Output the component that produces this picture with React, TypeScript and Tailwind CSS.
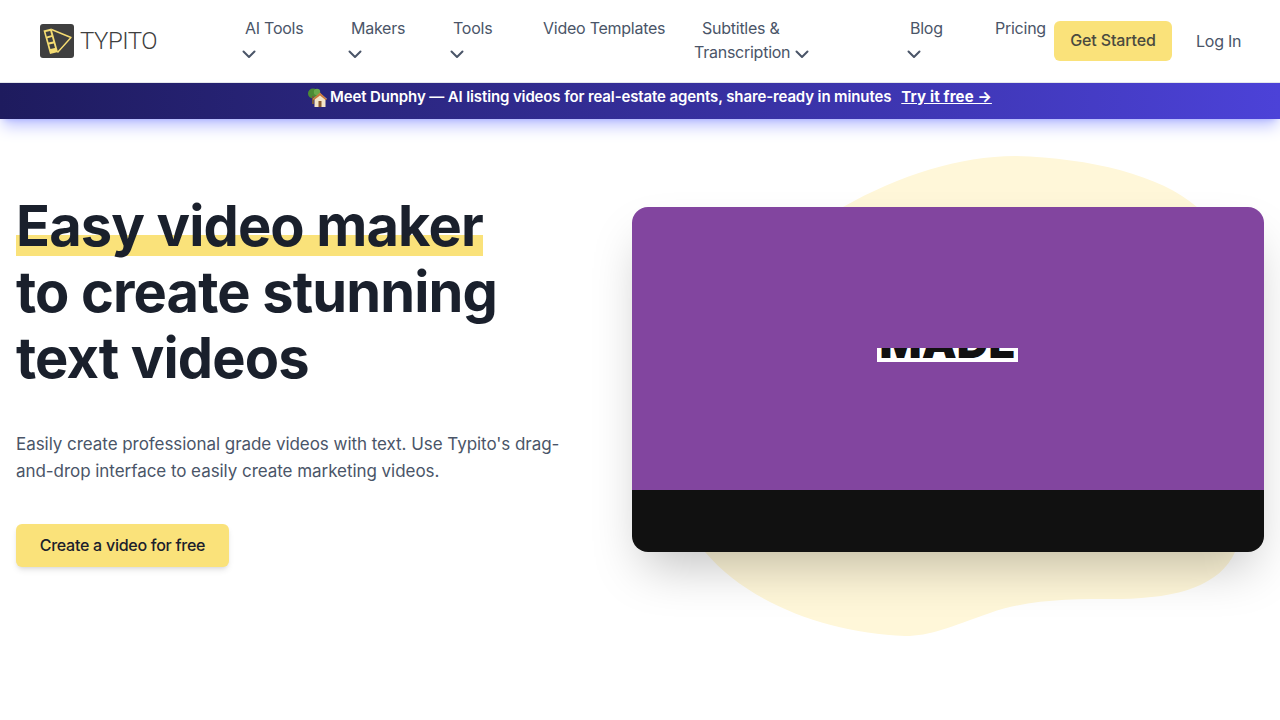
import React from 'react';

const Chevron = () => (
  <svg
    viewBox="0 0 24 24"
    fill="none"
    stroke="currentColor"
    strokeWidth="2"
    strokeLinecap="round"
    strokeLinejoin="round"
    className="inline-block w-6 h-6 align-top mt-[2px]"
  >
    <path d="M6.5 9.5 L12 15 L17.5 9.5" />
  </svg>
);

const Logo = () => (
  <svg viewBox="0 0 34 34" className="w-[34px] h-[34px] shrink-0">
    <rect width="34" height="34" rx="3" fill="#3f3f3f" />
    <path d="M11.5 5.5 L31 13.5 L17.5 28.5" fill="none" stroke="#f5dc72" strokeWidth="1.4" strokeLinejoin="round" />
    <path d="M3.5 6.5 L11.5 4.5 L18 28 L10 30 Z" fill="#f5dc72" />
    <g fill="#3f3f3f">
      <path d="M5.6 8 L10.2 6.9 L11.4 11.3 L6.8 12.4 Z" />
      <path d="M7.4 14.2 L12 13.1 L13.2 17.5 L8.6 18.6 Z" />
      <path d="M9.2 20.6 L13.8 19.5 L15 23.9 L10.4 25 Z" />
    </g>
  </svg>
);

const Header = () => (
  <header className="flex items-center h-[83px] pl-10 pr-10 bg-white border-b border-gray-200">
    <div className="flex items-center gap-[6px] w-[197px] shrink-0">
      <Logo />
      <span className="text-2xl font-light tracking-[-0.5px] font-['Roboto',sans-serif] text-[#3f3f3f]">TYPITO</span>
    </div>
    <nav className="flex items-start h-full pt-4 text-base leading-6 tracking-[-0.25px] text-[#4a5568]">
      <a className="w-[106px] shrink-0 block">
        <span className="block w-[68px] indent-2">
          AI&nbsp;Tools
          <Chevron />
        </span>
      </a>
      <a className="w-[102px] shrink-0 block">
        <span className="block w-[68px] indent-2">
          Makers
          <Chevron />
        </span>
      </a>
      <a className="w-[90px] shrink-0 block">
        <span className="block w-[60px] indent-2">
          Tools
          <Chevron />
        </span>
      </a>
      <a className="w-[159px] shrink-0 indent-2 block">Video Templates</a>
      <a className="w-[208px] shrink-0 block">
        <span className="block w-[130px] indent-2">
          Subtitles &amp; Transcription
          <Chevron />
        </span>
      </a>
      <a className="w-[85px] shrink-0 block">
        <span className="block w-[60px] indent-2">
          Blog
          <Chevron />
        </span>
      </a>
      <a className="w-[67px] shrink-0 indent-2 block">Pricing</a>
    </nav>
    <a className="flex items-center justify-center w-[118px] h-10 pb-[2px] rounded-md bg-[#fae27a] font-medium tracking-[-0.15px] text-[#4a4a3f] shrink-0">
      Get Started
    </a>
    <a className="ml-6 whitespace-nowrap tracking-[-0.25px] text-[#4a5568]">Log In</a>
  </header>
);

// the house-and-tree emoji of the banner
const HouseIcon = () => (
  <svg viewBox="0 0 20 20" className="w-5 h-5 shrink-0 mt-[3px] mr-[3px]">
    <circle cx="6" cy="5.5" r="5" fill="#4d8a35" />
    <circle cx="10" cy="4" r="3.2" fill="#6aa84a" />
    <rect x="5" y="8" width="2" height="8" fill="#7a5a3a" />
    <path d="M6 11 L13 5 L20 11 L18.5 11 L18.5 19 L7.5 19 L7.5 11 Z" fill="#f3e4c8" />
    <path d="M5.5 11.5 L13 4.5 L20 11.5 L18.6 12 L13 7.5 L7 12 Z" fill="#c8763a" />
    <rect x="11.5" y="13" width="3" height="6" fill="#8a5a30" />
  </svg>
);

const Banner = () => (
  <div className="flex h-9 pl-[307px] pt-[2px] bg-gradient-to-r from-[#1e1b5e] to-[#4c42d8] shadow-lg shadow-indigo-400/50 text-[15px] font-semibold text-white">
    <HouseIcon />
    <span className="leading-6 whitespace-nowrap tracking-[-0.125px]">
      Meet Dunphy — AI listing videos for real-estate agents, share-ready in minutes
    </span>
    <span className="ml-[10px] leading-6 underline font-bold tracking-[0.15px] whitespace-nowrap">Try it free →</span>
  </div>
);

const Blob = () => (
  <svg viewBox="0 0 580 490" className="absolute left-[680px] top-[36px] w-[580px] h-[490px]">
    <path
      fill="#fff7d9"
      d="M163 52 C220 20 280 1 335 1 C410 3 480 20 517 52 L555 397 C540 430 500 443 440 444 C390 444 350 444 310 458 C270 472 250 481 225 481 C150 478 70 450 25 397 Z"
    />
  </svg>
);

const Hero = () => (
  <section className="relative flex flex-1 gap-[48px] px-4 pt-[74px]">
    <Blob />
    <div className="relative w-[568px] shrink-0">
      <h1 className="text-[56px] leading-[66px] font-[650] tracking-[-0.88px] text-[#1a202c]">
        <span className="bg-[linear-gradient(transparent_43px,#fae27a_43px,#fae27a_64px,transparent_64px)]">
          Easy video maker
        </span>
        <br />
        to create stunning
        <br />
        text videos
      </h1>
      <p className="mt-[40px] text-[17px] leading-[27px] tracking-[-0.05px] text-[#4a5568]">
        Easily create professional grade videos with text. Use Typito's drag-and-drop interface to easily create
        marketing videos.
      </p>
      <a className="flex items-center justify-center mt-[39px] w-[213px] h-[43px] pb-[2px] rounded-md bg-[#fae27a] shadow-md font-medium tracking-[-0.26px] text-[#1a202c]">
        Create a video for free
      </a>
    </div>
    <div className="relative flex flex-col w-[632px] h-[345px] mt-[14px] rounded-2xl overflow-hidden shadow-2xl">
      <div className="flex flex-1 items-center justify-center bg-[#82459f]">
        <div className="w-[141px] h-[14px] mt-[13px] mr-[1px] overflow-hidden bg-white">
          <div className="-mt-[28px] text-center text-[44px] leading-[44px] font-black text-[#111]">MADE</div>
        </div>
      </div>
      <div className="h-[62px] bg-[#111]" />
    </div>
  </section>
);

export default function App() {
  return (
    <div className="flex flex-col w-[1280px] h-[720px] overflow-hidden bg-white font-['Inter',sans-serif]">
      <Header />
      <Banner />
      <Hero />
    </div>
  );
}
